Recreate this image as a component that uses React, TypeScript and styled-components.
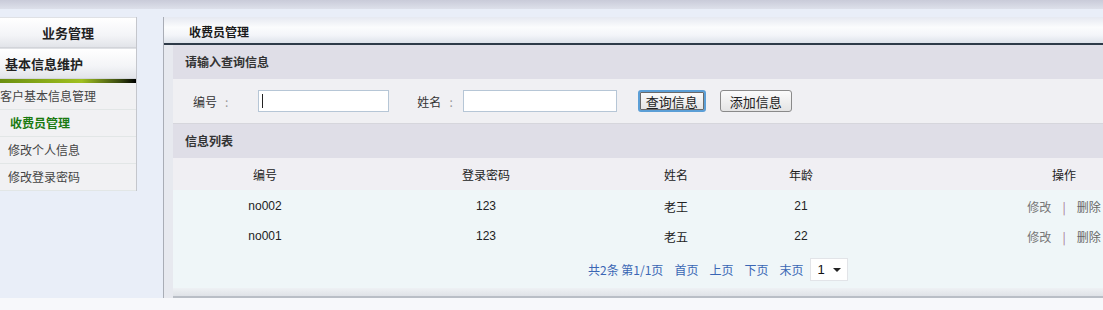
import React from 'react';
import styled, { createGlobalStyle } from 'styled-components';

const GlobalStyle = createGlobalStyle`
  html, body {
    margin: 0;
    padding: 0;
    background: #f7f8fb;
    font-family: "Liberation Sans", "Noto Sans CJK SC", sans-serif;
    font-size: 12px;
    color: #333;
    overflow: hidden;
  }
`;

const TopStrip = styled.div`
  height: 9px;
  background: linear-gradient(#c9cbd9, #dde0ea);
`;

const Page = styled.div`
  display: flex;
  align-items: flex-start;
  background: #e9eef8;
  padding-top: 8px;
  width: 1103px;
  overflow: hidden;
`;

const Sidebar = styled.div`
  width: 136px;
  flex: none;
  border-right: 1px solid #c4c6cc;
  background: #f1f1f3;
  margin-right: 26px;
`;

const SideHead = styled.div<{ $center?: boolean }>`
  height: 29px;
  line-height: 29px;
  font-family: "Noto Sans CJK SC", sans-serif;
  font-weight: bold;
  font-size: 13px;
  color: #222;
  text-align: ${(p) => (p.$center ? 'center' : 'left')};
  padding-left: ${(p) => (p.$center ? '0' : '5px')};
  background: linear-gradient(#ffffff, #f3f4f7 60%, #e2e4e9);
  border-bottom: 1px solid #d2d4d9;
  border-top: 1px solid #dfe1e5;
`;

const GreenBar = styled.div`
  height: 4px;
  background: linear-gradient(90deg, #6b8f10, #a0c020 60%, #3a4a10 88%, #000);
`;

const SideItem = styled.div<{ $active?: boolean; $indent: number }>`
  height: 26px;
  line-height: 26px;
  padding-left: ${(p) => p.$indent}px;
  font-family: "Noto Sans CJK SC", sans-serif;
  font-size: 12px;
  white-space: nowrap;
  color: ${(p) => (p.$active ? '#1a7a10' : '#444')};
  font-weight: ${(p) => (p.$active ? 'bold' : 'normal')};
  border-bottom: 1px solid #e2e6e6;
`;

const Panel = styled.div`
  width: 1100px;
  flex: none;
  border-left: 1px solid #a9adb6;
  background: #e9ecf3;
`;

const PanelHead = styled.div`
  height: 26px;
  line-height: 30px;
  padding-left: 25px;
  font-family: "Noto Sans CJK SC", sans-serif;
  font-weight: bold;
  font-size: 12px;
  color: #1a1a1a;
  background: linear-gradient(#e6e9f1, #fbfcfd 40%, #f3f5f9 70%, #dde2ea);
  border-bottom: 2px solid #2d3a48;
`;

const PanelBody = styled.div`
  padding-left: 9px;
  background: #e7e9ef;
`;

const SectionTitle = styled.div<{ $h: number }>`
  height: ${(p) => p.$h}px;
  line-height: ${(p) => p.$h}px;
  padding-left: 12px;
  font-family: "Noto Sans CJK SC", sans-serif;
  font-weight: bold;
  font-size: 12px;
  color: #333;
  background: #dfdee7;
`;

const SearchRow = styled.div`
  height: 44px;
  display: flex;
  align-items: center;
  padding-left: 20px;
  background: #f0f0f3;
  border-bottom: 1px solid #d6d6dc;
`;

const Label = styled.label<{ $gap: number }>`
  font-family: "Noto Sans CJK SC", sans-serif;
  font-size: 12px;
  color: #333;
  margin-right: ${(p) => p.$gap}px;
  white-space: nowrap;
`;

const Colon = styled.span`
  color: #999;
  margin-left: 8px;
`;

const InputWrap = styled.div<{ $w: number; $after: number }>`
  position: relative;
  width: ${(p) => p.$w}px;
  height: 22px;
  margin-right: ${(p) => p.$after}px;
  background: #fff;
  border: 1px solid #b6c6d6;
  box-sizing: border-box;
`;

const Caret = styled.span`
  position: absolute;
  left: 3px;
  top: 3px;
  width: 1px;
  height: 14px;
  background: #222;
`;

const Button = styled.button<{ $focus?: boolean }>`
  height: 22px;
  padding: 0 ${(p) => (p.$focus ? 6 : 9)}px;
  margin-right: 14px;
  font-family: "Noto Sans CJK SC", sans-serif;
  font-size: 13px;
  color: #222;
  border-radius: 3px;
  background: linear-gradient(#fbfbfb, #e4e4e4);
  border: ${(p) => (p.$focus ? '2px solid #5c9fd6' : '1px solid #8a8a8a')};
  box-shadow: ${(p) => (p.$focus ? 'inset 0 0 0 1px #6a6a6a' : 'none')};
  cursor: pointer;
`;

const cols = '184px 258px 122px 128px 398px';

const HeadRow = styled.div`
  display: grid;
  grid-template-columns: ${cols};
  height: 32px;
  align-items: center;
  background: #f0eff3;
  font-family: "Noto Sans CJK SC", sans-serif;
  font-size: 12px;
  color: #222;
  text-align: center;
`;

const TableBody = styled.div`
  background: #eff6f8;
  padding-top: 1px;
`;

const Row = styled.div`
  display: grid;
  grid-template-columns: ${cols};
  height: 30px;
  align-items: center;
  text-align: center;
  font-size: 12px;
  color: #222;
  font-family: "Liberation Sans", "Noto Sans CJK SC", sans-serif;
`;

const NameCell = styled.div`
  font-family: "Noto Sans CJK SC", sans-serif;
`;

const Actions = styled.div`
  font-family: "Noto Sans CJK SC", sans-serif;
  color: #777;
  white-space: nowrap;
  display: flex;
  justify-content: center;
  gap: 11px;
`;

const Sep = styled.span`
  color: #a3758f;
`;

const Delete = styled.span`
  color: #666;
`;

const Pager = styled.div`
  height: 37px;
  display: flex;
  align-items: center;
  padding-left: 415px;
  gap: 11px;
  font-family: "Noto Sans CJK SC", sans-serif;
  font-size: 12px;
  color: #3a66b4;
`;

const PageSelect = styled.div`
  display: flex;
  align-items: center;
  gap: 8px;
  height: 21px;
  padding: 0 6px;
  margin-left: -4px;
  background: #fff;
  border: 1px solid #e2e4e8;
  color: #111;
  font-family: "Liberation Sans", sans-serif;
  font-size: 13px;
`;

const Arrow = styled.span`
  width: 0;
  height: 0;
  border-left: 4px solid transparent;
  border-right: 4px solid transparent;
  border-top: 4px solid #222;
`;

const PanelFoot = styled.div`
  height: 8px;
  background: linear-gradient(#eef1f4, #dfe2e7);
  border-bottom: 2px solid #b9bec6;
`;

const rows = [
  { id: 'no002', pwd: '123', name: '老王', age: 21 },
  { id: 'no001', pwd: '123', name: '老五', age: 22 },
];

export default function App() {
  return (
    <>
      <GlobalStyle />
      <TopStrip />
      <Page>
        <Sidebar>
          <SideHead $center>业务管理</SideHead>
          <SideHead>基本信息维护</SideHead>
          <GreenBar />
          <SideItem $indent={0}>客户基本信息管理</SideItem>
          <SideItem $indent={10} $active>收费员管理</SideItem>
          <SideItem $indent={8}>修改个人信息</SideItem>
          <SideItem $indent={8}>修改登录密码</SideItem>
        </Sidebar>
        <Panel>
          <PanelHead>收费员管理</PanelHead>
          <PanelBody>
            <SectionTitle $h={34}>请输入查询信息</SectionTitle>
            <SearchRow>
              <Label $gap={30}>
                编号<Colon>:</Colon>
              </Label>
              <InputWrap $w={131} $after={28}>
                <Caret />
              </InputWrap>
              <Label $gap={10}>
                姓名<Colon>:</Colon>
              </Label>
              <InputWrap $w={154} $after={21} />
              <Button $focus>查询信息</Button>
              <Button>添加信息</Button>
            </SearchRow>
            <SectionTitle $h={34}>信息列表</SectionTitle>
            <HeadRow>
              <div>编号</div>
              <div>登录密码</div>
              <div>姓名</div>
              <div>年龄</div>
              <div>操作</div>
            </HeadRow>
            <TableBody>
              {rows.map((r) => (
                <Row key={r.id}>
                  <div>{r.id}</div>
                  <div>{r.pwd}</div>
                  <NameCell>{r.name}</NameCell>
                  <div>{r.age}</div>
                  <Actions>
                    <span>修改</span>
                    <Sep>|</Sep>
                    <Delete>删除</Delete>
                  </Actions>
                </Row>
              ))}
              <Pager>
                <span>共2条 第1/1页</span>
                <span>首页</span>
                <span>上页</span>
                <span>下页</span>
                <span>末页</span>
                <PageSelect>
                  1 <Arrow />
                </PageSelect>
              </Pager>
            </TableBody>
            <PanelFoot />
          </PanelBody>
        </Panel>
      </Page>
    </>
  );
}
